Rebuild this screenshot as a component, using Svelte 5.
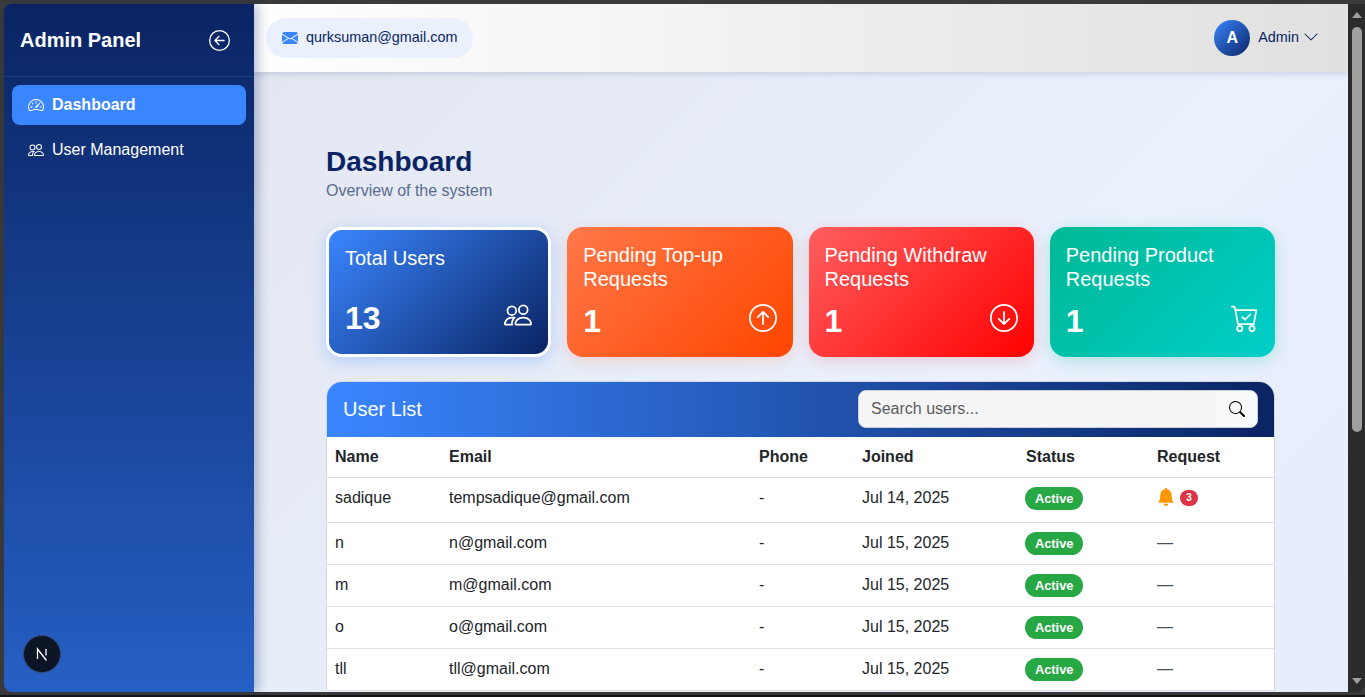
<script lang="ts">
  const users = [
    { name: 'sadique', email: 'tempsadique@gmail.com', joined: 'Jul 14, 2025', requests: 3 },
    { name: 'n', email: 'n@gmail.com', joined: 'Jul 15, 2025', requests: 0 },
    { name: 'm', email: 'm@gmail.com', joined: 'Jul 15, 2025', requests: 0 },
    { name: 'o', email: 'o@gmail.com', joined: 'Jul 15, 2025', requests: 0 },
    { name: 'tll', email: 'tll@gmail.com', joined: 'Jul 15, 2025', requests: 0 }
  ];
  const people = 'M15 14s1 0 1-1-1-4-5-4-5 3-5 4 1 1 1 1h8Zm-7.978-1A.261.261 0 0 1 7 12.996c.001-.264.167-1.030.76-1.724C8.312 10.629 9.282 10 11 10c1.717 0 2.687.63 3.24 1.272.593.694.760 1.461.760 1.724l-.008.002a.274.274 0 0 1-.014.002H7.022ZM11 7a2 2 0 1 0 0-4 2 2 0 0 0 0 4Zm3-2a3 3 0 1 1-6 0 3 3 0 0 1 6 0ZM6.936 9.280a5.880 5.880 0 0 0-1.230-.247A7.350 7.350 0 0 0 5 9c-4 0-5 3-5 4 0 .667.333 1 1 1h4.216A2.238 2.238 0 0 1 5 13c0-1.010.377-2.042 1.090-2.904.243-.294.526-.569.846-.816ZM4.920 10A5.420 5.420 0 0 0 4 13H1c0-.260.164-1.030.760-1.724.545-.636 1.492-1.256 3.160-1.275ZM1.500 5.500a3 3 0 1 1 6 0 3 3 0 0 1-6 0Zm3-2a2 2 0 1 0 0 4 2 2 0 0 0 0-4Z';
</script>

<div class="window">
  <aside class="sidebar">
    <div class="brand">
      <h1>Admin Panel</h1>
      <svg class="back" viewBox="0 0 16 16" fill="#fff"><path d="M1 8a7 7 0 1 0 14 0A7 7 0 0 0 1 8zm15 0A8 8 0 1 1 0 8a8 8 0 0 1 16 0zm-4.500-.5a.5.5 0 0 1 0 1H5.707l2.147 2.146a.5.5 0 0 1-.708.708l-3-3a.5.5 0 0 1 0-.708l3-3a.5.5 0 1 1 .708.708L5.707 7.500H11.500z"/></svg>
    </div>
    <nav>
      <a class="item active" href="#dash">
        <svg viewBox="0 0 16 16" fill="#fff"><path d="M8 4a.5.5 0 0 1 .5.5V6a.5.5 0 0 1-1 0V4.500A.5.5 0 0 1 8 4zM3.732 5.732a.5.5 0 0 1 .707 0l.915.914a.5.5 0 1 1-.708.708l-.914-.915a.5.5 0 0 1 0-.707zM2 10a.5.5 0 0 1 .5-.5h1.586a.5.5 0 0 1 0 1H2.500A.5.5 0 0 1 2 10zm9.500 0a.5.5 0 0 1 .5-.5h1.500a.5.5 0 0 1 0 1H12a.5.5 0 0 1-.5-.5zm.754-4.246a.389.389 0 0 0-.527-.02L7.547 9.310a.910.910 0 1 0 1.302 1.258l3.434-4.297a.389.389 0 0 0-.029-.518z"/><path d="M0 10a8 8 0 1 1 15.547 2.661c-.442 1.253-1.845 1.602-2.932 1.250C11.309 13.488 9.475 13 8 13c-1.474 0-3.310.488-4.615.911-1.087.352-2.490.003-2.932-1.250A7.988 7.988 0 0 1 0 10zm8-7a7 7 0 0 0-6.603 9.329c.203.575.923.876 1.680.630C4.397 12.533 6.358 12 8 12s3.604.532 4.923.96c.757.245 1.477-.056 1.680-.631A7 7 0 0 0 8 3z"/></svg>
        <span>Dashboard</span>
      </a>
      <a class="item" href="#users">
        <svg viewBox="0 0 16 16" fill="#fff"><path d={people}/></svg>
        <span>User Management</span>
      </a>
    </nav>
    <div class="next">
      <svg viewBox="0 0 14 14" fill="none" stroke="#fff" stroke-width="1.300"><path d="M2.500 12V2L11.500 13.500M11 2v6.500"/></svg>
    </div>
  </aside>

  <div class="right">
    <header class="topbar">
      <div class="mail">
        <svg viewBox="0 0 16 16" fill="#3a86ff"><path d="M.05 3.555A2 2 0 0 1 2 2h12a2 2 0 0 1 1.950 1.555L8 8.414.05 3.555ZM0 4.697v7.104l5.803-3.558L0 4.697ZM6.761 8.830l-6.570 4.027A2 2 0 0 0 2 14h12a2 2 0 0 0 1.808-1.144l-6.570-4.027L8 9.586l-1.239-.757Zm3.436-.586L16 11.801V4.697l-5.803 3.546Z"/></svg>
        <span>qurksuman@gmail.com</span>
      </div>
      <div class="account">
        <div class="avatar">A</div>
        <span>Admin</span>
        <svg viewBox="0 0 16 16" fill="#0a2463"><path d="M1.646 4.646a.5.5 0 0 1 .708 0L8 10.293l5.646-5.647a.5.5 0 0 1 .708.708l-6 6a.5.5 0 0 1-.708 0l-6-6a.5.5 0 0 1 0-.708z"/></svg>
      </div>
    </header>

    <main>
      <h2>Dashboard</h2>
      <p class="sub">Overview of the system</p>

      <section class="cards">
        <div class="card blue">
          <div class="label">Total Users</div>
          <div class="bottom">
            <strong>13</strong>
            <svg viewBox="0 0 16 16" fill="#fff"><path d={people}/></svg>
          </div>
        </div>
        <div class="card orange">
          <div class="label">Pending Top-up Requests</div>
          <div class="bottom">
            <strong>1</strong>
            <svg viewBox="0 0 16 16" fill="#fff"><path d="M1 8a7 7 0 1 0 14 0A7 7 0 0 0 1 8zm15 0A8 8 0 1 1 0 8a8 8 0 0 1 16 0zm-7.500 3.500a.5.5 0 0 1-1 0V5.707L5.354 7.854a.5.5 0 1 1-.708-.708l3-3a.5.5 0 0 1 .708 0l3 3a.5.5 0 0 1-.708.708L8.500 5.707V11.500z"/></svg>
          </div>
        </div>
        <div class="card red">
          <div class="label">Pending Withdraw Requests</div>
          <div class="bottom">
            <strong>1</strong>
            <svg viewBox="0 0 16 16" fill="#fff"><path d="M1 8a7 7 0 1 0 14 0A7 7 0 0 0 1 8zm15 0A8 8 0 1 1 0 8a8 8 0 0 1 16 0zM8.500 4.500a.5.5 0 0 0-1 0v5.793L5.354 8.146a.5.5 0 1 0-.708.708l3 3a.5.5 0 0 0 .708 0l3-3a.5.5 0 0 0-.708-.708L8.500 10.293V4.500z"/></svg>
          </div>
        </div>
        <div class="card teal">
          <div class="label">Pending Product Requests</div>
          <div class="bottom">
            <strong>1</strong>
            <svg viewBox="0 0 16 16" fill="#fff"><path d="M11.354 6.354a.5.5 0 0 0-.708-.708L8 8.293 6.854 7.146a.5.5 0 1 0-.708.708l1.500 1.500a.5.5 0 0 0 .708 0l3-3z"/><path d="M.5 1a.5.5 0 0 0 0 1h1.110l.401 1.607 1.498 7.985A.5.5 0 0 0 4 12h1a2 2 0 1 0 0 4 2 2 0 0 0 0-4h7a2 2 0 1 0 0 4 2 2 0 0 0 0-4h1a.5.5 0 0 0 .491-.408l1.500-8A.5.5 0 0 0 14.500 3H2.890l-.405-1.621A.5.5 0 0 0 2 1H.5zm3.915 10L3.102 4h10.796l-1.313 7h-8.170zM6 14a1 1 0 1 1-2 0 1 1 0 0 1 2 0zm7 0a1 1 0 1 1-2 0 1 1 0 0 1 2 0z"/></svg>
          </div>
        </div>
      </section>

      <section class="panel">
        <div class="panel-head">
          <h3>User List</h3>
          <div class="search">
            <input placeholder="Search users..." />
            <button aria-label="Search">
              <svg viewBox="0 0 16 16" fill="#000"><path d="M11.742 10.344a6.500 6.500 0 1 0-1.397 1.398h-.001c.03.04.062.078.098.115l3.850 3.850a1 1 0 0 0 1.415-1.414l-3.850-3.850a1.007 1.007 0 0 0-.115-.1zM12 6.500a5.500 5.500 0 1 1-11 0 5.500 5.500 0 0 1 11 0z"/></svg>
            </button>
          </div>
        </div>
        <table>
          <thead>
            <tr>
              <th class="c1">Name</th>
              <th class="c2">Email</th>
              <th class="c3">Phone</th>
              <th class="c4">Joined</th>
              <th class="c5">Status</th>
              <th>Request</th>
            </tr>
          </thead>
          <tbody>
            {#each users as u}
              <tr>
                <td>{u.name}</td>
                <td>{u.email}</td>
                <td>-</td>
                <td>{u.joined}</td>
                <td><span class="status">Active</span></td>
                <td>
                  {#if u.requests}
                    <span class="req">
                      <svg viewBox="0 0 16 16" fill="#ff9800"><path d="M8 16a2 2 0 0 0 2-2H6a2 2 0 0 0 2 2zm.995-14.901a1 1 0 1 0-1.990 0A5.002 5.002 0 0 0 3 6c0 1.098-.5 6-2 7h14c-1.500-1-2-5.902-2-7 0-2.420-1.720-4.440-4.005-4.901z"/></svg>
                      <span class="count">{u.requests}</span>
                    </span>
                  {:else}
                    <span class="none">—</span>
                  {/if}
                </td>
              </tr>
            {/each}
          </tbody>
        </table>
      </section>
    </main>
  </div>

  <div class="scrollbar">
    <span class="arrow up"></span>
    <span class="thumb"></span>
    <span class="arrow down"></span>
  </div>
</div>

<style>
  :global(body) {
    margin: 0;
    background: #3a3a3a;
    font-family: "Liberation Sans", Arial, sans-serif;
    overflow: hidden;
  }
  .window {
    display: flex;
    height: 697px;
    box-sizing: border-box;
    padding: 4px 0 3px 4px;
    background: #3a3a3a;
    border-bottom: 2px solid #141414;
  }
  .sidebar {
    width: 250px;
    flex: none;
    display: flex;
    flex-direction: column;
    background: linear-gradient(180deg, #0a2463, #265fc4);
    border-radius: 8px 0 0 8px;
    box-shadow: 4px 0 12px rgba(10, 36, 99, 0.3);
    position: relative;
    z-index: 2;
  }
  .brand {
    height: 72px;
    display: flex;
    align-items: center;
    justify-content: space-between;
    padding: 0 24px 0 16px;
    border-bottom: 1px solid #1d3f85;
  }
  .brand h1 {
    margin: 0;
    color: #fff;
    font-size: 20px;
    font-weight: 700;
  }
  .back {
    width: 21px;
    height: 21px;
  }
  nav {
    display: flex;
    flex-direction: column;
    gap: 5px;
    padding: 8px;
  }
  .item {
    height: 40px;
    display: flex;
    align-items: center;
    gap: 8px;
    padding: 0 16px;
    border-radius: 8px;
    color: #fff;
    font-size: 16px;
    text-decoration: none;
  }
  .item svg {
    width: 16px;
    height: 16px;
  }
  .item.active {
    background: #3a86ff;
    font-weight: 700;
  }
  .next {
    margin: auto 0 19px 19px;
    width: 38px;
    height: 38px;
    box-sizing: border-box;
    border-radius: 50%;
    background: #0b1526;
    border: 1px solid #33486e;
    display: flex;
    align-items: center;
    justify-content: center;
  }
  .next svg {
    width: 14px;
    height: 14px;
  }
  .right {
    flex: 1;
    min-width: 0;
    display: flex;
    flex-direction: column;
    overflow: hidden;
  }
  .topbar {
    height: 68px;
    flex: none;
    display: flex;
    align-items: center;
    justify-content: space-between;
    padding: 0 29px 0 12px;
    background: linear-gradient(90deg, #fff, #e0e0e0);
    box-shadow: 0 2px 6px rgba(10, 36, 99, 0.15);
    position: relative;
    z-index: 1;
  }
  .mail {
    height: 40px;
    display: flex;
    align-items: center;
    gap: 8px;
    padding: 0 16px;
    border-radius: 20px;
    background: #eaf1fd;
    color: #0a2463;
    font-size: 14.4px;
  }
  .mail svg {
    width: 16px;
    height: 16px;
  }
  .mail span,
  .account span {
    margin-bottom: 2px;
  }
  .account {
    display: flex;
    align-items: center;
    gap: 8px;
    color: #0a2463;
    font-size: 14.4px;
  }
  .account svg {
    width: 16px;
    height: 16px;
    margin-left: -4px;
    margin-bottom: 2px;
  }
  .avatar {
    width: 36px;
    height: 36px;
    border-radius: 50%;
    background: linear-gradient(135deg, #3a86ff, #0a2463);
    color: #fff;
    font-size: 16px;
    font-weight: 700;
    display: flex;
    align-items: center;
    justify-content: center;
  }
  main {
    flex: 1;
    overflow: hidden;
    padding: 74px 73px 0 72px;
    background: linear-gradient(135deg, #e3e7f1, #eaf1fd 60%, #e6ecf9);
  }
  h2 {
    margin: 0;
    color: #0a2463;
    font-size: 28px;
    font-weight: 700;
    line-height: 32px;
  }
  .sub {
    margin: 3px 0 0;
    color: #5a6b8c;
    font-size: 16px;
    line-height: 20px;
  }
  .cards {
    display: grid;
    grid-template-columns: repeat(4, 1fr);
    gap: 16px;
    margin-top: 26px;
  }
  .card {
    height: 130px;
    box-sizing: border-box;
    border-radius: 16px;
    padding: 16px 16px 17px;
    color: #fff;
    display: flex;
    flex-direction: column;
    justify-content: space-between;
  }
  .blue {
    background: linear-gradient(135deg, #3a86ff, #0a2463);
    border: 3px solid #fff;
    box-shadow: 0 4px 16px rgba(58, 134, 255, 0.3);
  }
  .orange {
    background: linear-gradient(135deg, #ff7849, #ff4500);
    box-shadow: 0 4px 16px rgba(255, 69, 0, 0.16);
  }
  .red {
    background: linear-gradient(135deg, #ff5f5f, #f00);
    box-shadow: 0 4px 16px rgba(255, 0, 0, 0.16);
  }
  .teal {
    background: linear-gradient(135deg, #00b894, #00cec9);
    box-shadow: 0 4px 16px rgba(0, 184, 148, 0.25);
  }
  .label {
    font-size: 20px;
    line-height: 24px;
  }
  .bottom {
    display: flex;
    justify-content: space-between;
    align-items: flex-start;
  }
  .bottom strong {
    font-size: 32px;
    line-height: 38px;
  }
  .bottom svg {
    width: 28px;
    height: 28px;
    margin-top: 2px;
  }
  .panel {
    margin-top: 24px;
    background: #fff;
    border: 1px solid #d5d8e0;
    border-bottom: 0;
    border-radius: 16px 16px 0 0;
    overflow: hidden;
  }
  .panel-head {
    height: 55px;
    display: flex;
    align-items: center;
    justify-content: space-between;
    padding: 0 16px;
    background: linear-gradient(90deg, #3a86ff, #0a2463);
  }
  h3 {
    margin: 0;
    color: #fff;
    font-size: 20px;
    font-weight: 400;
  }
  .search {
    width: 400px;
    height: 38px;
    margin-bottom: 2px;
    display: flex;
    border-radius: 8px;
    overflow: hidden;
    box-sizing: border-box;
    border: 1px solid #c9ced8;
    background: #f8f9fa;
  }
  .search input {
    flex: 1;
    min-width: 0;
    border: 0;
    outline: 0;
    padding: 0 12px;
    background: #f5f5f5;
    font: 16px "Liberation Sans", Arial, sans-serif;
  }
  .search input::placeholder {
    color: #595c5f;
    opacity: 1;
  }
  .search button {
    width: 41px;
    border: 0;
    padding: 0;
    background: #f8f9fa;
    display: flex;
    align-items: center;
    justify-content: center;
  }
  .search svg {
    width: 16px;
    height: 16px;
  }
  table {
    width: 100%;
    border-collapse: collapse;
    color: #212529;
    font-size: 16px;
  }
  th {
    height: 40px;
    padding: 0 8px;
    text-align: left;
    font-weight: 700;
    border-bottom: 1px solid #dee2e6;
  }
  td {
    height: 33px;
    padding: 8px 8px 0;
    line-height: 24px;
    vertical-align: top;
    border-bottom: 1px solid #dee2e6;
  }
  tbody tr:first-child td {
    height: 36px;
  }
  .c1 { width: 98px; }
  .c2 { width: 294px; }
  .c3 { width: 87px; }
  .c4 { width: 148px; }
  .c5 { width: 115px; }
  .status {
    display: inline-block;
    padding: 0 10px;
    margin: 1px 0 0 -1px;
    border-radius: 12px;
    background: #28a745;
    color: #fff;
    font-size: 12.8px;
    font-weight: 700;
    line-height: 23px;
  }
  .req {
    display: inline-flex;
    align-items: center;
    gap: 5px;
    margin-top: 2px;
    vertical-align: top;
  }
  .req svg {
    width: 18px;
    height: 18px;
  }
  .count {
    min-width: 18px;
    height: 16px;
    border-radius: 9px;
    margin-top: 2px;
    background: #dc3545;
    color: #fff;
    font-size: 10px;
    font-weight: 700;
    display: flex;
    align-items: center;
    justify-content: center;
  }
  .none {
    color: #495057;
  }
  .scrollbar {
    width: 17px;
    flex: none;
    margin-right: 0;
    display: flex;
    flex-direction: column;
    align-items: center;
    background: #2b2b2b;
    border-radius: 0 0 8px 0;
  }
  .thumb {
    width: 10px;
    height: 405px;
    margin-top: 9px;
    border-radius: 5px;
    background: #9f9f9f;
  }
  .arrow {
    width: 0;
    height: 0;
    border-left: 5px solid transparent;
    border-right: 5px solid transparent;
  }
  .arrow.up {
    margin-top: 8px;
    border-bottom: 6px solid #9f9f9f;
  }
  .arrow.down {
    margin-top: auto;
    margin-bottom: 8px;
    border-top: 6px solid #9f9f9f;
  }
</style>
